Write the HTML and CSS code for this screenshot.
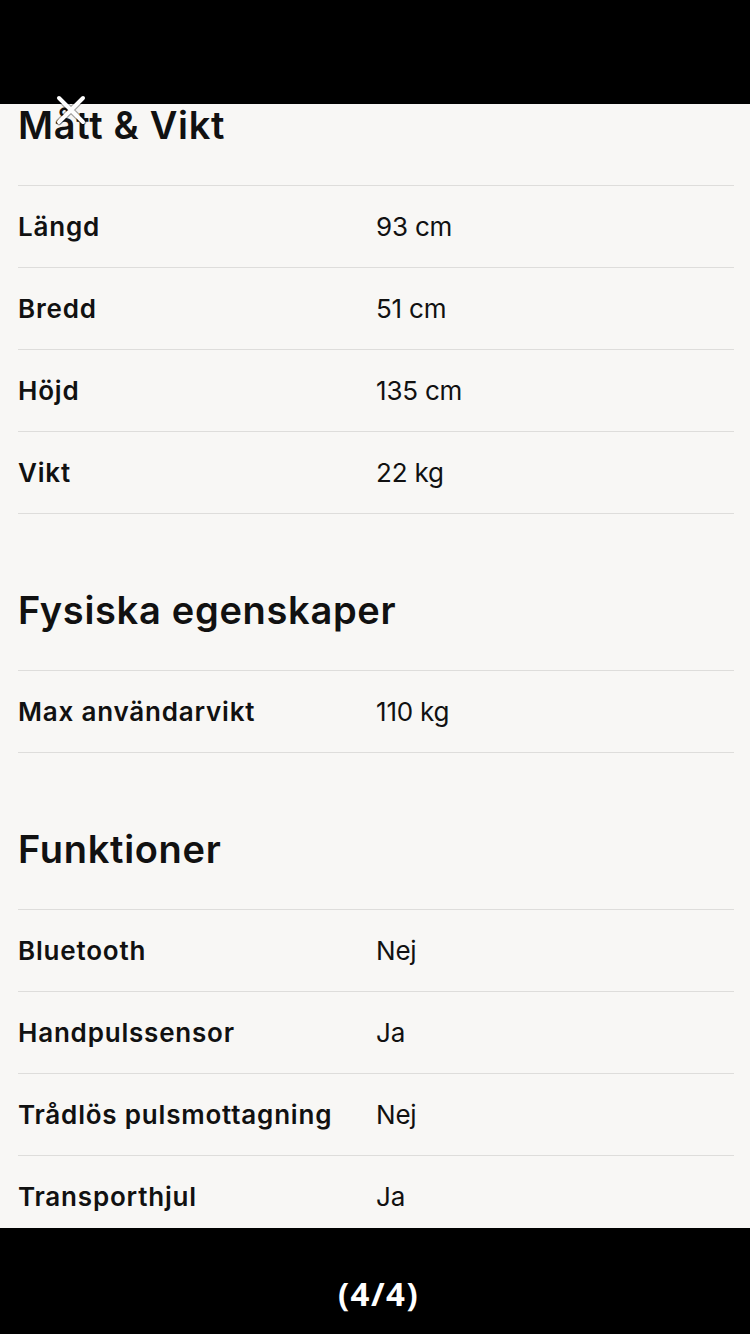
FILE: index.html
```html
<!DOCTYPE html>
<html lang="sv">
<head>
<meta charset="UTF-8">
<meta name="viewport" content="width=device-width, initial-scale=1.0">
<title>Mått &amp; Vikt</title>
<link rel="stylesheet" href="styles.css">
</head>
<body>
    <div class="viewer">
        <div class="topbar"></div>

        <div class="sheet">
            <div class="specs">
                <section class="group first">
                    <h2>Mått &amp; Vikt</h2>
                    <div class="list">
                        <div class="row"><span class="label">Längd</span><span class="value">93 cm</span></div>
                        <div class="row"><span class="label">Bredd</span><span class="value">51 cm</span></div>
                        <div class="row"><span class="label">Höjd</span><span class="value">135 cm</span></div>
                        <div class="row"><span class="label">Vikt</span><span class="value">22 kg</span></div>
                    </div>
                </section>

                <section class="group">
                    <h2>Fysiska egenskaper</h2>
                    <div class="list">
                        <div class="row"><span class="label">Max användarvikt</span><span class="value">110 kg</span></div>
                    </div>
                </section>

                <section class="group">
                    <h2>Funktioner</h2>
                    <div class="list">
                        <div class="row"><span class="label">Bluetooth</span><span class="value">Nej</span></div>
                        <div class="row"><span class="label">Handpulssensor</span><span class="value">Ja</span></div>
                        <div class="row"><span class="label">Trådlös pulsmottagning</span><span class="value">Nej</span></div>
                        <div class="row"><span class="label">Transporthjul</span><span class="value">Ja</span></div>
                    </div>
                </section>
            </div>
        </div>

        <div class="bottombar">(4/4)</div>

        <!-- stängknapp ovanpå bilden -->
        <svg class="close" width="36" height="36" viewBox="0 0 36 36">
            <path d="M6 6 L30 30 M30 6 L6 30" stroke="rgba(0,0,0,0.35)" stroke-width="6.5" stroke-linecap="round" fill="none"/>
            <path d="M6 6 L30 30 M30 6 L6 30" stroke="#fff" stroke-width="4" stroke-linecap="round" fill="none"/>
        </svg>
    </div>
</body>
</html>
```

FILE: styles.css
```css
body {
    margin: 0;
    padding: 0;
    background-color: #000;
    font-family: Inter, "Noto Sans", sans-serif;
    color: #111;
}
.viewer {
    position: relative;
    width: 750px;
    height: 1334px;
    display: flex;
    flex-direction: column;
    overflow: hidden;
}
.topbar {
    height: 104px;
    flex-shrink: 0;
    background-color: #000;
}
.sheet {
    height: 1124px;
    flex-shrink: 0;
    overflow: hidden;
    background-color: #f8f7f5;
}
.specs {
    margin-top: -3px;
    padding: 0 16px 0 18px;
}
.group {
    padding-top: 72px;
}
.group.first {
    padding-top: 0;
}
.group h2 {
    margin: 0 0 36px 0;
    height: 48px;
    line-height: 48px;
    font-size: 38px;
    font-weight: 600;
    letter-spacing: 0.7px;
    color: #111;
}
.list {
    border-top: 1px solid #dedddb;
}
.row {
    display: grid;
    grid-template-columns: 358px 1fr;
    align-items: center;
    height: 81px;
    border-bottom: 1px solid #dedddb;
    font-size: 26px;
}
.label {
    font-weight: 600;
    letter-spacing: 0.8px;
}
.value {
    font-weight: 400;
    letter-spacing: -0.2px;
}
.bottombar {
    flex: 1;
    background-color: #000;
    color: #fff;
    text-align: center;
    padding: 46px 0 0 7px;
    box-sizing: border-box;
    font-family: "Open Sans", "Noto Sans", sans-serif;
    font-weight: 700;
    font-size: 33px;
    line-height: 40px;
    letter-spacing: 1.5px;
}
.close {
    position: absolute;
    top: 92px;
    left: 53px;
}
```
